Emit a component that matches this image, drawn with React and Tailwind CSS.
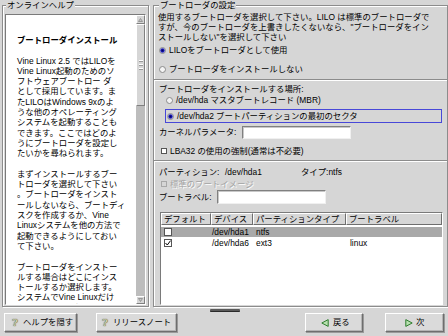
import React from "react";

const FONT = "font-['Liberation_Sans','Noto_Sans_CJK_JP',sans-serif]";

function Radio({ checked }) {
  return (
    <svg width="7" height="7" viewBox="0 0 7 7" className="shrink-0">
      <circle cx="3.5" cy="3.5" r="3" fill="#f4f4f4" stroke="#8a8a8a" strokeWidth="1" />
      {checked && <circle cx="3.5" cy="3.5" r="2.2" fill="#1a1ab8" />}
      {checked && <circle cx="3.5" cy="3.5" r="1" fill="#000060" />}
    </svg>
  );
}

function Check({ checked, size = 7, disabled }) {
  return (
    <div
      className={
        "shrink-0 border flex items-center justify-center " +
        (disabled ? "border-[#a8a8a8] bg-[#d6d6d6]" : "border-[#555] bg-white")
      }
      style={{ width: size, height: size }}
    >
      {checked && (
        <svg width={size - 2} height={size - 2} viewBox="0 0 6 6">
          <path d="M0.5 3 L2.3 5 L5.6 0.6" fill="none" stroke="#000" strokeWidth="1" />
        </svg>
      )}
    </div>
  );
}

function Sep() {
  return <div className="-mx-[4px] h-[2px] border-t border-t-[#8c8c8c] border-b border-b-white" />;
}

function Input({ w }) {
  return (
    <div
      className="h-full bg-white border border-t-[#808080] border-l-[#808080] border-b-[#f0f0f0] border-r-[#f0f0f0] shadow-[inset_1px_1px_0_#c8c8c8]"
      style={{ width: w }}
    />
  );
}

function Btn({ w, ml, children }) {
  return (
    <div
      className="h-[19px] shrink-0 flex items-center border border-t-white border-l-white border-b-[#6e6e6e] border-r-[#6e6e6e] shadow-[1px_1px_0_#9a9a9a,inset_-1px_-1px_0_#b4b4b4] bg-[#dadada]"
      style={{ width: w, marginLeft: ml }}
    >
      {children}
    </div>
  );
}

function HelpIcon() {
  return (
    <span className="font-['DejaVu_Serif',serif] font-bold text-[10px] leading-none text-[#c8cca8] [text-shadow:0_0_1px_#5a5a40,0_0_1px_#5a5a40]">
      ?
    </span>
  );
}

const leftLines = [
  "Vine Linux 2.5 ではLILOを",
  "Vine Linux起動のためのソ",
  "フトウェアブートロー ダ",
  "として採用しています。ま",
  "たLILOはWindows 9xのよ",
  "うな他のオペレーティング",
  "システムを起動することも",
  "できます。ここではどのよ",
  "うにブートローダを設定し",
  "たいかを尋ねられます。",
  "",
  "まずインストールするブー",
  "トローダを選択して下さい",
  "。ブートローダをインスト",
  "ールしないなら、ブートディ",
  "スクを作成するか、Vine",
  "Linuxシステムを他の方法で",
  "起動できるようにしておい",
  "て下さい。",
  "",
  "ブートローダをインストー",
  "ルする場合はどこにインス",
  "トールするか選択します。",
  "システムでVine Linuxだけ",
  "を使用している場合はマス",
];

export default function App() {
  return (
    <div className={"w-[448px] h-[336px] bg-[#d6d6d6] text-black text-[8.4px] overflow-hidden flex flex-col " + FONT}>
      <div className="flex h-[308px] shrink-0">
        {/* Left: online help */}
        <fieldset className="ml-[2px] w-[146px] h-[307px] border border-[#8c8c8c] shadow-[inset_1px_1px_0_#fff,1px_1px_0_#fff] px-[2px]">
          <legend className="ml-[1px] px-[1px] leading-[11px] bg-[#d6d6d6]">オンラインヘルプ</legend>
          <div className="mt-[3px] w-[141px] h-[291px] flex border border-t-[#7a7a7a] border-l-[#7a7a7a] border-b-white border-r-white">
            <div className="w-[130px] bg-white overflow-hidden pl-[11px] pt-[20px] leading-[10.3px] whitespace-nowrap">
              <div className="font-bold">ブートローダインストール</div>
              <div className="h-[10.3px]" />
              {leftLines.map((l, i) => (
                <div key={i} className="h-[10.3px]">{l}</div>
              ))}
            </div>
            <div className="w-[9px] bg-[#bdbdbd] flex flex-col">
              <div className="h-[9px] bg-[#d6d6d6] border border-t-white border-l-white border-b-[#808080] border-r-[#808080] flex items-center justify-center">
                <svg width="5" height="4" viewBox="0 0 5 4"><path d="M2.5 0.5 L4.5 3.5 L0.5 3.5 Z" fill="#c8c8c8" stroke="#8a8a8a" strokeWidth="0.8" /></svg>
              </div>
              <div className="h-[82px] bg-[#d6d6d6] border border-t-white border-l-white border-b-[#808080] border-r-[#808080] flex flex-col items-center justify-center gap-[2px]">
                <div className="w-[4px] h-[2px] border-t border-t-white border-b border-b-[#9a9a9a]" />
                <div className="w-[4px] h-[2px] border-t border-t-white border-b border-b-[#9a9a9a]" />
                <div className="w-[4px] h-[2px] border-t border-t-white border-b border-b-[#9a9a9a]" />
              </div>
              <div className="flex-1" />
              <div className="h-[8px] bg-[#d6d6d6] border border-t-white border-l-white border-b-[#808080] border-r-[#808080] flex items-center justify-center">
                <svg width="5" height="4" viewBox="0 0 5 4"><path d="M0.5 0.5 L4.5 0.5 L2.5 3.5 Z" fill="#c8c8c8" stroke="#8a8a8a" strokeWidth="0.8" /></svg>
              </div>
            </div>
          </div>
        </fieldset>

        {/* Right: bootloader settings */}
        <fieldset className="ml-[4px] w-[294px] h-[307px] border border-[#8c8c8c] shadow-[inset_1px_1px_0_#fff,1px_1px_0_#fff] pl-[4px] pr-[4px]">
          <legend className="ml-[1px] px-[1px] leading-[11px] bg-[#d6d6d6]">ブートローダの設定</legend>
          <div className="flex flex-col whitespace-nowrap">
            <div className="leading-[10px] mt-[1px]">
              <div>使用するブートローダを選択して下さい。LILO は標準のブートローダで</div>
              <div>すが、今のブートローダを上書きしたくないなら、"ブートローダをイン</div>
              <div>ストールしない"を選択して下さい</div>
            </div>
            <div className="mt-[2px] h-[12px] flex items-center gap-[3px] ml-[1px]">
              <Radio checked />
              <span>LILOをブートローダとして使用</span>
            </div>
            <div className="mt-[7px] h-[12px] flex items-center gap-[3px] ml-[1px]">
              <Radio />
              <span>ブートローダをインストールしない</span>
            </div>
            <div className="mt-[4px]"><Sep /></div>
            <div className="mt-[3px] h-[10px] flex items-center ml-[1px]">ブートローダをインストールする場所:</div>
            <div className="mt-[1px] h-[10px] flex items-center gap-[3px] ml-[8px]">
              <Radio />
              <span>/dev/hda マスタブートレコード (MBR)</span>
            </div>
            <div className="mt-[4px] ml-[7px] w-[277px] h-[14px] border border-[#4848d8] flex items-center gap-[3px] pl-[1px]">
              <Radio checked />
              <span>/dev/hda2 ブートパーティションの最初のセクタ</span>
            </div>
            <div className="mt-[3px] h-[13px] flex items-center ml-[1px]">
              <span className="w-[83px]">カーネルパラメータ:</span>
              <Input w={109} />
            </div>
            <div className="mt-[7px] h-[10px] flex items-center gap-[3px] ml-[3px]">
              <Check size={6} />
              <span>LBA32 の使用の強制(通常は不必要)</span>
            </div>
            <div className="mt-[4px]"><Sep /></div>
            <div className="mt-[5px] h-[10px] flex items-center ml-[1px]">
              <span className="w-[66px]">パーティション:</span>
              <span className="w-[76px]">/dev/hda1</span>
              <span>タイプ:ntfs</span>
            </div>
            <div className="mt-[2px] h-[10px] flex items-center gap-[3px] ml-[3px] text-[#a4a4a4] [text-shadow:1px_1px_0_#fff]">
              <Check size={6} disabled />
              <span>標準のブートイメージ</span>
            </div>
            <div className="mt-[1px] h-[14px] flex items-center ml-[1px]">
              <span className="w-[58px]">ブートラベル:</span>
              <Input w={109} />
            </div>
            <div className="mt-[8px] ml-[2px] w-[283px] h-[93px] border border-t-[#7a7a7a] border-l-[#7a7a7a] border-b-white border-r-white flex flex-col bg-white">
              <div className="flex h-[12px] bg-[#d6d6d6] shrink-0">
                {[
                  ["デフォルト", 50],
                  ["デバイス", 42],
                  ["パーティションタイプ", 93],
                  ["ブートラベル", 96],
                ].map(([t, w]) => (
                  <div
                    key={t}
                    className="h-full flex items-center pl-[2px] border border-t-white border-l-white border-b-[#6e6e6e] border-r-[#6e6e6e] overflow-hidden"
                    style={{ width: w }}
                  >
                    {t}
                  </div>
                ))}
              </div>
              <div className="mt-[2px] h-[10px] flex items-center bg-[#a9a9a9]">
                <div className="w-[50px] pl-[3px]"><Check size={8} /></div>
                <div className="w-[42px] pl-[1px]">/dev/hda1</div>
                <div className="w-[93px] pl-[3px]">ntfs</div>
                <div className="pl-[4px]"></div>
              </div>
              <div className="mt-[1px] h-[10px] flex items-center">
                <div className="w-[50px] pl-[3px]"><Check size={8} checked /></div>
                <div className="w-[42px] pl-[1px]">/dev/hda6</div>
                <div className="w-[93px] pl-[3px]">ext3</div>
                <div className="pl-[4px]">linux</div>
              </div>
            </div>
          </div>
        </fieldset>
      </div>

      {/* Paned handle */}
      <div className="h-[5px] shrink-0 flex items-center">
        <div className="ml-[210px] w-[30px] h-[3px] bg-[#5a5a5a] rounded-[1px] border-b border-b-[#2a2a2a]" />
      </div>

      {/* Bottom buttons */}
      <div className="flex items-start">
        <Btn w={73} ml={4}>
          <div className="ml-[7px] w-[6px] flex justify-center"><HelpIcon /></div>
          <span className="ml-[5px]">ヘルプを隠す</span>
        </Btn>
        <Btn w={81} ml={19}>
          <div className="ml-[5px] w-[6px] flex justify-center"><HelpIcon /></div>
          <span className="ml-[5px]">リリースノート</span>
        </Btn>
        <Btn w={58} ml={128}>
          <svg width="8" height="8" viewBox="0 0 8 8" className="ml-[15px]">
            <path d="M0.8 4 L7.2 0.6 L7.2 7.4 Z" fill="#b8e0b0" stroke="#2e7d2e" strokeWidth="1" />
          </svg>
          <span className="ml-[4px]">戻る</span>
        </Btn>
        <Btn w={59} ml={22}>
          <svg width="8" height="8" viewBox="0 0 8 8" className="ml-[19px]">
            <path d="M7.2 4 L0.8 0.6 L0.8 7.4 Z" fill="#b8e0b0" stroke="#2e7d2e" strokeWidth="1" />
          </svg>
          <span className="ml-[3px]">次</span>
        </Btn>
      </div>
    </div>
  );
}
